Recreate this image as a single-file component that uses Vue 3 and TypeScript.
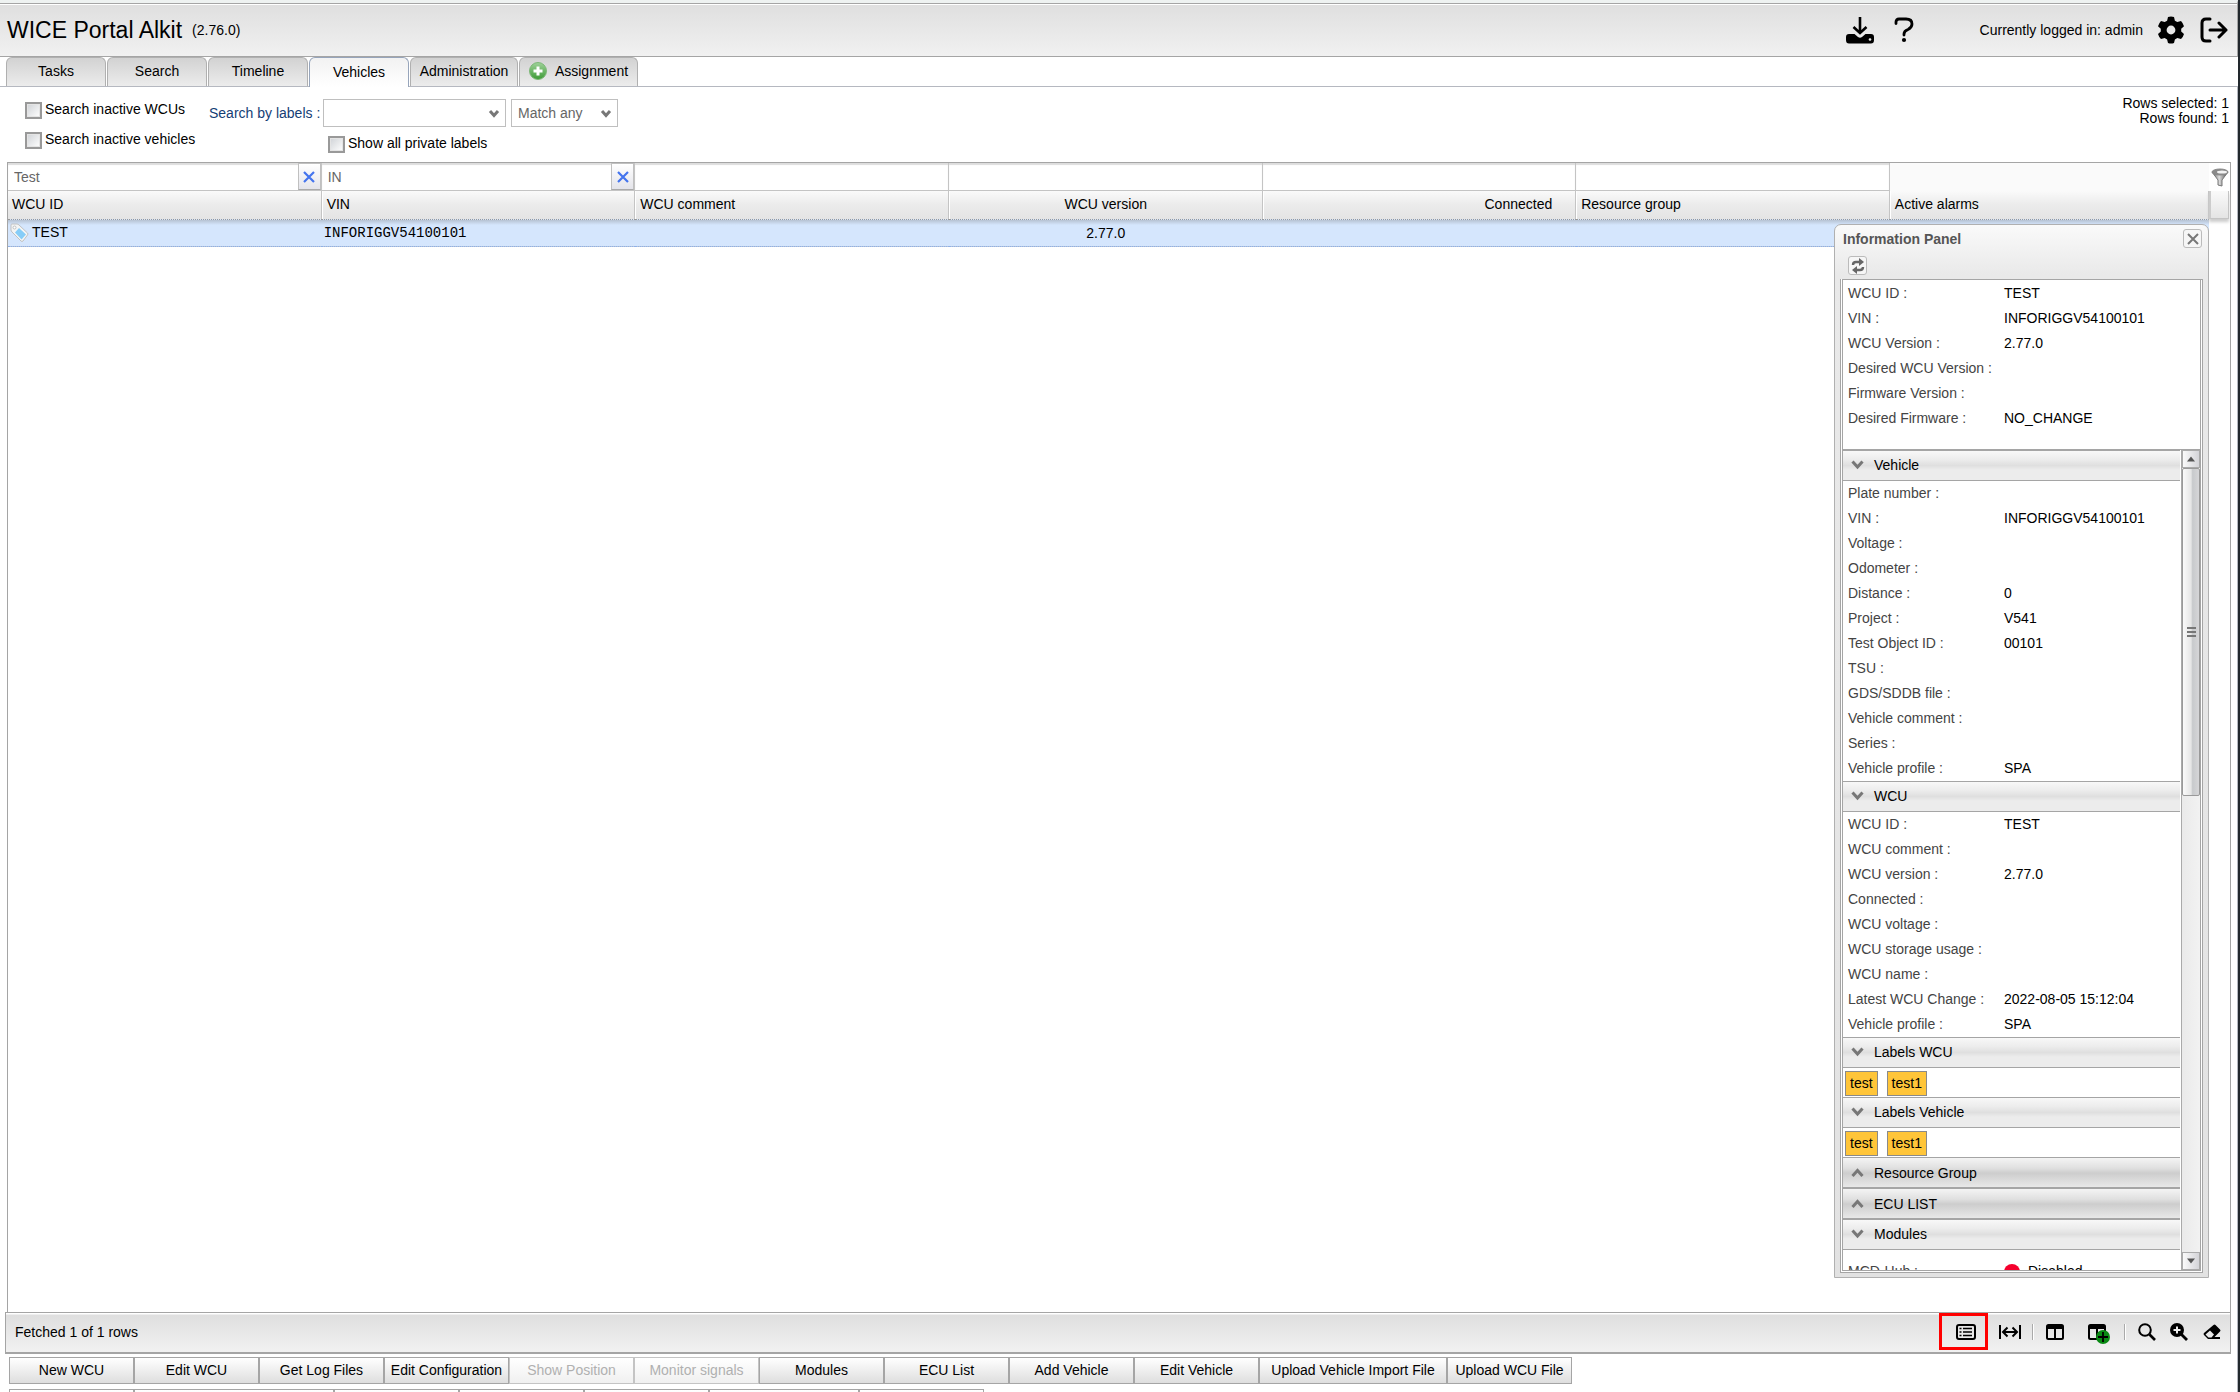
<script setup lang="ts">
import { ref } from 'vue'

interface Field { label: string; value?: string; off?: boolean }
interface Section { title: string; open: boolean; fields?: Field[]; tags?: string[]; inset?: boolean }
interface Column { title: string; filter: string | null; align: string; clearable?: boolean }

const tabs = ['Tasks', 'Search', 'Timeline', 'Vehicles', 'Administration', 'Assignment']
const activeTab = ref('Vehicles')

const columns = ref<Column[]>([
  { title: 'WCU ID', filter: 'Test', align: 'left', clearable: true },
  { title: 'VIN', filter: 'IN', align: 'left', clearable: true },
  { title: 'WCU comment', filter: '', align: 'left' },
  { title: 'WCU version', filter: '', align: 'center' },
  { title: 'Connected', filter: '', align: 'right' },
  { title: 'Resource group', filter: '', align: 'left' },
  { title: 'Active alarms', filter: null, align: 'left' },
])

const summary: Field[] = [
  { label: 'WCU ID', value: 'TEST' },
  { label: 'VIN', value: 'INFORIGGV54100101' },
  { label: 'WCU Version', value: '2.77.0' },
  { label: 'Desired WCU Version' },
  { label: 'Firmware Version' },
  { label: 'Desired Firmware', value: 'NO_CHANGE' },
]

const sections = ref<Section[]>([
  {
    title: 'Vehicle', open: true, fields: [
      { label: 'Plate number' },
      { label: 'VIN', value: 'INFORIGGV54100101' },
      { label: 'Voltage' },
      { label: 'Odometer' },
      { label: 'Distance', value: '0' },
      { label: 'Project', value: 'V541' },
      { label: 'Test Object ID', value: '00101' },
      { label: 'TSU' },
      { label: 'GDS/SDDB file' },
      { label: 'Vehicle comment' },
      { label: 'Series' },
      { label: 'Vehicle profile', value: 'SPA' },
    ],
  },
  {
    title: 'WCU', open: true, fields: [
      { label: 'WCU ID', value: 'TEST' },
      { label: 'WCU comment' },
      { label: 'WCU version', value: '2.77.0' },
      { label: 'Connected' },
      { label: 'WCU voltage' },
      { label: 'WCU storage usage' },
      { label: 'WCU name' },
      { label: 'Latest WCU Change', value: '2022-08-05 15:12:04' },
      { label: 'Vehicle profile', value: 'SPA' },
    ],
  },
  { title: 'Labels WCU', open: true, tags: ['test', 'test1'] },
  { title: 'Labels Vehicle', open: true, tags: ['test', 'test1'] },
  { title: 'Resource Group', open: false },
  { title: 'ECU LIST', open: false },
  { title: 'Modules', open: true, inset: true, fields: [{ label: 'MCD-Hub', value: 'Disabled', off: true }] },
])

const actions = [
  { text: 'New WCU' }, { text: 'Edit WCU' }, { text: 'Get Log Files' }, { text: 'Edit Configuration' },
  { text: 'Show Position', disabled: true }, { text: 'Monitor signals', disabled: true },
  { text: 'Modules' }, { text: 'ECU List' }, { text: 'Add Vehicle' }, { text: 'Edit Vehicle' },
  { text: 'Upload Vehicle Import File', size: 'wide' }, { text: 'Upload WCU File' },
]
const moreActions = [125, 200, 125, 125, 125, 150, 125]
</script>

<template>
  <div class="app">
    <header class="top">
      <h1>WICE Portal Alkit</h1>
      <span class="version">(2.76.0)</span>
      <div class="top-right">
        <button class="plain dl" type="button">
          <svg width="28" height="28" viewBox="0 0 28 28">
            <path d="M14 1v15M7.500 11L14 17l6.500-6" fill="none" stroke="#000" stroke-width="2.600" />
            <path d="M3 18h5.500l3.500 3q2 1.500 4 0l3.500-3H25q3 0 3 3v3q0 3.500-3 3.500H3q-3 0-3-3.500v-3q0-3 3-3z" fill="#000" />
            <circle cx="24" cy="23.500" r="1.300" fill="#eee" />
          </svg>
        </button>
        <button class="plain help" type="button">
          <svg width="20" height="26" viewBox="0 0 20 26">
            <path d="M2 6.500V5Q2 2 5 2h7q6 0 6 5 0 3.500-4 5.500-4 1.500-4 4.500v1" fill="none" stroke="#000" stroke-width="2.800" stroke-linecap="round" />
            <circle cx="10" cy="23" r="2.100" />
          </svg>
        </button>
        <span class="user">Currently logged in: admin</span>
        <button class="plain gear" type="button">
          <svg width="28" height="28" viewBox="0 0 28 28">
            <path fill-rule="evenodd" d="M11 1q3-1 6 0l.9 3.700 2.400 1.400 3.700-1.100q2.200 2.300 3 5.200l-2.800 2.500v2.700l2.800 2.500q-.8 2.900-3 5.200l-3.700-1.100-2.400 1.400L17 27q-3 1-6 0l-.9-3.600-2.400-1.400L4 23.100q-2.200-2.300-3-5.200l2.800-2.500v-2.700L1 10.200Q1.800 7.300 4 5l3.700 1.100 2.400-1.400zM14 9.600a4.400 4.400 0 1 0 0 8.800 4.400 4.400 0 0 0 0-8.800z" />
          </svg>
        </button>
        <button class="plain" type="button">
          <svg width="28" height="26" viewBox="0 0 28 26">
            <path d="M10 2H6Q2 2 2 6v14q0 4 4 4h4M10 13h16M19 6l7 7-7 7" fill="none" stroke="#000" stroke-width="3" stroke-linecap="round" stroke-linejoin="round" />
          </svg>
        </button>
      </div>
    </header>

    <nav class="tabs">
      <button v-for="t in tabs" :key="t" type="button" class="tab" :class="{ active: t === activeTab, admin: t === 'Administration', assign: t === 'Assignment' }" @click="activeTab = t">
        <svg v-if="t === 'Assignment'" width="18" height="18" viewBox="0 0 18 18">
          <defs><linearGradient id="green" x2="0" y2="1"><stop stop-color="#9fd29a" /><stop offset="1" stop-color="#3d9a35" /></linearGradient></defs>
          <circle cx="9" cy="9" r="8.500" fill="url(#green)" stroke="#7db877" />
          <path d="M9 4.500v9M4.500 9h9" stroke="#fff" stroke-width="3" />
        </svg>
        {{ t }}
      </button>
    </nav>

    <main>
      <form class="search" @submit.prevent>
        <div class="checks">
          <label class="check"><input type="checkbox" />Search inactive WCUs</label>
          <label class="check"><input type="checkbox" />Search inactive vehicles</label>
        </div>
        <label class="by" for="labels">Search by labels :</label>
        <div class="label-filter">
          <div class="selects">
            <span class="select wide"><select id="labels"><option></option></select>
              <svg width="12" height="9" viewBox="0 0 12 9"><path d="M2 2l4 4.500L10 2" /></svg></span>
            <span class="select"><select aria-label="Match"><option>Match any</option></select>
              <svg width="12" height="9" viewBox="0 0 12 9"><path d="M2 2l4 4.500L10 2" /></svg></span>
          </div>
          <label class="check private"><input type="checkbox" />Show all private labels</label>
        </div>
        <p class="counts">Rows selected: 1<br />Rows found: 1</p>
      </form>

      <section class="grid">
        <div class="grid-head">
          <table>
            <thead>
              <tr class="filters">
                <td v-for="c in columns" :key="c.title" :class="{ blank: c.filter === null }">
                  <div v-if="c.filter !== null" class="filter">
                    <input v-model="c.filter" type="text" :aria-label="c.title" />
                    <button v-if="c.clearable" type="button" class="clear" @click="c.filter = ''">
                      <svg width="12" height="12" viewBox="0 0 12 12"><path d="M1 1l10 10M11 1L1 11" stroke="#4474ee" stroke-width="2.200" /></svg>
                    </button>
                  </div>
                </td>
              </tr>
              <tr class="titles">
                <th v-for="c in columns" :key="c.title" scope="col" :class="c.align">{{ c.title }}</th>
              </tr>
            </thead>
            <tbody>
              <tr>
                <td class="id">
                  <svg width="20" height="20" viewBox="0 0 20 20">
                    <path d="M1 2q0-1 1-1h5q1 0 2 1l8.500 8q1 1 0 2L13 18q-1 1-2 0L2 9Q1 8 1 7z" fill="#f4f5f5" stroke="#bfc1c2" />
                    <path d="M9 5l7 6.500-4.500 5-6.500-7z" fill="#86cdf8" />
                    <circle cx="4.500" cy="4.500" r="1.500" fill="#fff" stroke="#bfc1c2" />
                  </svg>TEST
                </td>
                <td class="vin">INFORIGGV54100101</td>
                <td></td>
                <td class="center">2.77.0</td>
                <td></td>
                <td></td>
                <td></td>
              </tr>
            </tbody>
          </table>
          <div class="corner">
            <button type="button" class="funnel">
              <svg width="18" height="19" viewBox="0 0 18 19">
                <defs><linearGradient id="metal"><stop stop-color="#555" /><stop offset=".45" stop-color="#ddd" /><stop offset="1" stop-color="#444" /></linearGradient></defs>
                <path d="M1 4l6 8v5l4 1v-6l6-8z" fill="url(#metal)" stroke="#777" />
                <ellipse cx="9" cy="4" rx="8" ry="3" fill="#8a8a8a" stroke="#888" />
                <ellipse cx="11" cy="4" rx="5" ry="1.500" fill="#f2f2f2" />
              </svg>
            </button>
            <div class="corner-title"></div>
          </div>
        </div>

        <aside class="panel">
          <div class="panel-title">
            <h2>Information Panel</h2>
            <button type="button" class="tool">
              <svg width="12" height="12" viewBox="0 0 12 12"><path d="M1 1l10 10M11 1L1 11" stroke="#777" stroke-width="2" /></svg>
            </button>
          </div>
          <div class="panel-tools">
            <button type="button" class="tool">
              <svg width="14" height="16" viewBox="0 0 14 16">
                <path d="M2 7q0-3 3-3h5M12 9q0 3-3 3H4" fill="none" stroke="#666" stroke-width="2.400" />
                <path d="M8 0l5 4-5 4zM6 8l-5 4 5 4z" fill="#666" />
              </svg>
            </button>
          </div>
          <div class="panel-body">
            <dl class="summary">
              <div v-for="f in summary" :key="f.label" class="field"><dt>{{ f.label }} :</dt><dd>{{ f.value }}</dd></div>
            </dl>
            <div class="scroll">
              <div class="sections">
                <section v-for="s in sections" :key="s.title">
                  <button type="button" class="bar" :class="{ closed: !s.open }" @click="s.open = !s.open">
                    <svg width="13" height="10" viewBox="0 0 13 10"><path :d="s.open ? 'M1.500 1.500l5 5.500 5-5.500' : 'M1.500 8l5-5.500 5 5.500'" /></svg>
                    {{ s.title }}
                  </button>
                  <dl v-if="s.open && s.fields" :class="{ inset: s.inset }">
                    <div v-for="f in s.fields" :key="f.label" class="field">
                      <dt>{{ f.label }} :</dt>
                      <dd><i v-if="f.off" class="dot"></i>{{ f.value }}</dd>
                    </div>
                  </dl>
                  <div v-if="s.open && s.tags" class="tags"><span v-for="t in s.tags" :key="t">{{ t }}</span></div>
                </section>
              </div>
              <div class="track">
                <button type="button" class="arrow"><svg width="10" height="6" viewBox="0 0 10 6"><path d="M1 5.500l4-5 4 5z" /></svg></button>
                <div class="thumb"><i></i><i></i><i></i></div>
                <button type="button" class="arrow down"><svg width="10" height="6" viewBox="0 0 10 6"><path d="M1 .5l4 5 4-5z" /></svg></button>
              </div>
            </div>
          </div>
        </aside>
      </section>

      <footer class="status">
        <span>Fetched 1 of 1 rows</span>
        <div class="icons">
          <button type="button" class="plain marked">
            <svg width="20" height="16" viewBox="0 0 20 16" fill="none" stroke="#000">
              <rect x="1" y="1" width="18" height="14" rx="2" stroke-width="2" />
              <path d="M7 4.500h9M7 8h9M7 11.500h9M3.500 4.500h2M3.500 8h2M3.500 11.500h2" stroke-width="1.500" />
            </svg>
          </button>
          <button type="button" class="plain fit">
            <svg width="22" height="14" viewBox="0 0 22 14" fill="none" stroke="#000" stroke-width="2">
              <path d="M1 0v14M21 0v14M4 7h14M8.500 2.500L4 7l4.500 4.500M13.500 2.500L18 7l-4.500 4.500" />
            </svg>
          </button>
          <i class="sep"></i>
          <button type="button" class="plain cols">
            <svg width="18" height="16" viewBox="0 0 18 16" fill="none" stroke="#000" stroke-width="2">
              <rect x="1" y="1" width="16" height="14" rx="1.500" /><path d="M1 3h16" stroke-width="4" /><path d="M9 4v11" />
            </svg>
          </button>
          <button type="button" class="plain addcol">
            <svg width="22" height="20" viewBox="0 0 22 20">
              <g fill="none" stroke="#000" stroke-width="2"><rect x="1" y="1" width="16" height="14" rx="1.500" /><path d="M1 3h16" stroke-width="4" /><path d="M9 4v11" /></g>
              <circle cx="15" cy="13" r="7" fill="#0a8a14" /><path d="M15 8v10M10 13h10" stroke="#000" stroke-width="1.800" />
            </svg>
          </button>
          <i class="sep last"></i>
          <button type="button" class="plain find">
            <svg width="18" height="18" viewBox="0 0 18 18" fill="none" stroke="#000"><circle cx="7" cy="7" r="5.800" stroke-width="2" /><path d="M11.500 11.500l5.500 5.500" stroke-width="2.600" /></svg>
          </button>
          <button type="button" class="plain zoom">
            <svg width="18" height="18" viewBox="0 0 18 18"><circle cx="7" cy="7" r="7" /><path d="M11 11l6 6" stroke="#000" stroke-width="2.800" /><path d="M7 3.500v7M3.500 7h7" stroke="#eee" stroke-width="2" /></svg>
          </button>
          <button type="button" class="plain">
            <svg width="18" height="16" viewBox="0 0 18 16"><path fill-rule="evenodd" d="M10.500 1q1-1 2 0l4.500 4.500q1 1 0 2L11.500 13H17v2H5l-4-4q-1-1 0-2zM7 6.500L2.500 10.500 5.500 13.500h3l2.500-3z" /></svg>
          </button>
        </div>
      </footer>
    </main>

    <div class="actions">
      <div class="row">
        <button v-for="a in actions" :key="a.text" type="button" :class="a.size" :disabled="a.disabled">{{ a.text }}</button>
      </div>
      <div class="row">
        <button v-for="(w, i) in moreActions" :key="i" type="button" :style="{ width: w + 'px' }"></button>
      </div>
    </div>
  </div>
</template>

<style>
body { margin: 0; background: #22282d; }
</style>

<style scoped>
* { box-sizing: border-box; }
.app {
  height: 100vh;
  margin-right: 2px;
  display: flex;
  flex-direction: column;
  overflow: hidden;
  background: #fff;
  color: #000;
  font: 14px/16px "Liberation Sans", Arial, sans-serif;
}
button, input, select { font: inherit; color: inherit; padding: 0; margin: 0; border-radius: 0; }
button { cursor: pointer; }
svg { display: block; flex: none; }
h1, h2, p, dl, dd { margin: 0; font-weight: normal; }
.plain { border: 0; background: none; display: flex; }

.top {
  display: flex;
  align-items: center;
  flex: none;
  height: 57px;
  padding: 0 9px 0 7px;
  border-top: 3px solid #eef2f1;
  border-bottom: 1px solid #a5a5a5;
  border-right: 1px solid #a5a5a5;
  background: linear-gradient(#a5a5a5 0 1px, #fff 1px 2px, #dfdfdf 2px, #f1f1f1);
}
h1 { font-size: 23px; line-height: 26px; }
.version { margin-left: 10px; }
.top-right { margin-left: auto; display: flex; align-items: center; }
.dl { margin-right: 20px; }
.help { margin-right: 66px; }
.gear { margin: 0 15px 0 14px; }

.tabs {
  display: flex;
  gap: 1px;
  flex: none;
  height: 30px;
  padding-left: 6px;
  border-bottom: 1px solid #b5b8c0;
}
.tab {
  display: flex;
  align-items: center;
  justify-content: center;
  gap: 8px;
  width: 100px;
  padding-bottom: 2px;
  border: 1px solid #b0b0b0;
  border-bottom: 0;
  border-radius: 6px 6px 0 0;
  background: linear-gradient(#d2d2d2, #ececec);
}
.admin { width: 108px; }
.assign { width: 119px; }
.tab.active { height: 30px; border-color: #97a5bb; background: linear-gradient(#f2f2f2, #fff); }

main { flex: 1; min-height: 0; display: flex; flex-direction: column; padding: 0 6px 0 5px; border-right: 1px solid #b5b8c0; }

.search { display: flex; align-items: flex-start; flex: none; height: 75px; padding: 12px 2px 0 20px; }
.checks { width: 184px; display: flex; flex-direction: column; gap: 14px; padding-top: 3px; }
.check { display: flex; gap: 3px; height: 16px; line-height: 15px; }
.check input {
  appearance: none;
  width: 17px;
  height: 17px;
  flex: none;
  border: 2px solid #999;
  outline: 1px solid #e4e4e4;
  outline-offset: -3px;
  background: linear-gradient(135deg, #cfd2d6, #fff);
}
.by { width: 114px; padding-top: 6px; color: #153e75; }
.selects { display: flex; gap: 5px; }
.select { position: relative; width: 107px; }
.select.wide { width: 183px; }
.select select { appearance: none; display: block; width: 100%; height: 28px; padding-left: 6px; border: 1px solid #bfbfbf; background: #fff; color: #666; }
.select svg { position: absolute; right: 6px; top: 10px; pointer-events: none; }
.select path, .bar path { fill: none; stroke: #777; stroke-width: 3; }
.private { margin: 9px 0 0 5px; }
.counts { margin: -3px 0 0 auto; line-height: 15px; text-align: right; }

.grid { position: relative; flex: 1; min-height: 0; margin-left: 2px; border: 1px solid #a5a5a5; border-bottom: 0; }
.grid-head { display: flex; }
table { flex: 1; min-width: 0; table-layout: fixed; border-collapse: separate; border-spacing: 0; }
td, th { padding: 0; width: 14.25%; font-weight: normal; }
td:last-child, th:last-child { width: auto; }
.filters td { height: 28px; border-right: 1px solid #c4c4c4; border-bottom: 1px solid #c4c4c4; box-shadow: inset 0 2px 1px #ddd; }
.filters .blank { border-color: #fafafa; background: #fafafa; box-shadow: none; }
.filter { display: flex; height: 27px; }
.filter input { flex: 1; min-width: 0; padding-left: 6px; border: 0; outline: 0; background: none; color: #666; }
.clear { width: 23px; display: flex; align-items: center; justify-content: center; border: 1px solid #c0c0c0; border-bottom-color: #aaa; background: linear-gradient(#fff, #e4e4ea); }
.titles th { height: 28px; padding: 0 23px 2px 4px; border-right: 1px solid #c4c4c4; background: linear-gradient(#fafafa, #ebebeb 50%, #e4e4e4); }
th.left { text-align: left; }
th.right { text-align: right; }
.titles .center { text-align: center; padding: 0 0 2px; }
th + th { border-left: 1px solid #fff; }
.center { text-align: center; }
tbody td { height: 28px; border-top: 1px dotted #999; border-bottom: 1px dotted #8fb0e8; background: linear-gradient(#b6c2d2, #d5e6fd 5px); }
.id { padding-left: 2px; }
.id svg { display: inline-block; vertical-align: middle; margin-right: 2px; }
.vin { padding-left: 2px; font-family: "Liberation Mono", monospace; }
.corner { width: 21px; }
.funnel { display: flex; width: 100%; height: 28px; padding: 5px 0 0 2px; border: 0; background: #fff; }
.corner-title { height: 28px; margin-right: 1px; border: 1px solid #c4c4c4; border-top: 0; border-left: 2px solid #ccc; background: linear-gradient(#fafafa, #e4e4e4); box-shadow: 0 3px 3px #ccc; }

.panel {
  position: absolute;
  top: 61px;
  right: 21px;
  bottom: 34px;
  width: 375px;
  display: flex;
  flex-direction: column;
  padding: 0 5px 4px;
  border: 1px solid #b0b0b0;
  border-radius: 7px 7px 0 0;
  background: linear-gradient(#fafafa, #e9e9e9 50px, #e2e2e2);
}
.panel-title { display: flex; align-items: center; height: 27px; padding: 0 1px 0 3px; flex: none; }
.panel-title h2 { flex: 1; font-size: 14px; font-weight: bold; line-height: 16px; color: #555; }
.tool { display: flex; align-items: center; justify-content: center; width: 19px; height: 19px; border: 1px solid #bbb; border-radius: 3px; background: #f6f6f6; }
.panel-tools { height: 27px; padding: 4px 0 0 8px; flex: none; }
.panel-body { flex: 1; min-height: 0; display: flex; flex-direction: column; border: 3px double #a5a5a5; background: #fff; border-top: 1px solid #a5a5a5; }
.summary { flex: none; height: 169px; padding-top: 1px; }
.field { display: flex; height: 25px; padding-left: 5px; line-height: 25px; }
dt { width: 156px; color: #444; }
dd { display: flex; align-items: center; }
.scroll { flex: 1; min-height: 0; display: flex; border-top: 1px solid #a5a5a5; }
.sections { flex: 1; min-width: 0; overflow: hidden; border-right: 1px solid #fff; }
.bar {
  display: flex;
  align-items: center;
  gap: 10px;
  width: 100%;
  height: 31px;
  padding: 0 0 2px 8px;
  border: solid #a5a5a5;
  border-width: 1px 0;
  background: linear-gradient(#f8f8f8, #ececec 30%, #dfdfdf 50%, #ececec 65%, #ececec);
}
.bar.closed { padding-bottom: 0; background: linear-gradient(#f4f4f4, #e0e0e0 35%, #cdcdcd 52%, #e8e8e8); }
.inset { padding-top: 9px; }
.dot { width: 16px; height: 16px; margin-right: 8px; border-radius: 50%; background: #f5002d; }
.tags { display: flex; gap: 9px; height: 29px; padding: 3px 2px; }
.tags span { height: 25px; padding: 0 4px; border: 1px solid #8a8a8a; background: #ffc539; line-height: 23px; }
.track { display: flex; flex-direction: column; width: 19px; border-left: 1px solid #aaa; background: linear-gradient(90deg, #eaeaea, #f2f2f2); }
.arrow { display: flex; align-items: center; justify-content: center; height: 18px; border: 1px solid #aaa; background: linear-gradient(90deg, #fafafa, #d4d4d8); flex: none; }
.arrow path { fill: #555; }
.down { margin-top: auto; }
.thumb { display: flex; flex-direction: column; align-items: center; justify-content: center; gap: 2px; height: 40%; border: 1px solid #999; border-radius: 2px; background: linear-gradient(90deg, #fafafa, #e6e6e6 50%, #c8cacc 60%, #d6d6d8); }
.thumb i { width: 9px; height: 2px; background: #777; }

.status {
  display: flex;
  align-items: center;
  flex: none;
  height: 42px;
  padding: 0 9px 2px;
  border: 1px solid #a5a5a5;
  border-bottom-width: 2px;
  background: linear-gradient(#fff 0 1px, #dfdfdf 2px, #f1f1f1);
}
.icons { margin-left: auto; display: flex; align-items: center; }
.marked { width: 49px; height: 37px; align-items: center; padding-left: 14px; border: 3px solid #f00; }
.fit { margin: 0 11px; }
.sep { width: 2px; height: 16px; border-left: 1px solid #aaa; background: #fff; }
.cols { margin: 0 24px 0 12px; }
.addcol { padding-top: 4px; }
.last { margin: 0 12px 0 14px; }
.zoom { margin: 0 15px 0 14px; }

.actions { flex: none; height: 38px; padding: 3px 0 0 9px; overflow: hidden; border-right: 1px solid #b5b8c0; }
.row { display: flex; margin-bottom: 5px; }
.row button { width: 125px; height: 27px; padding-bottom: 2px; border: 1px solid #a5a5a5; background: linear-gradient(#fff, #dedede); white-space: nowrap; }
.row .wide { width: 188px; }
.row button:disabled { color: #b0b0b0; border-color: #c4c4c4; background: linear-gradient(#fff, #f0f0f0); }
</style>
